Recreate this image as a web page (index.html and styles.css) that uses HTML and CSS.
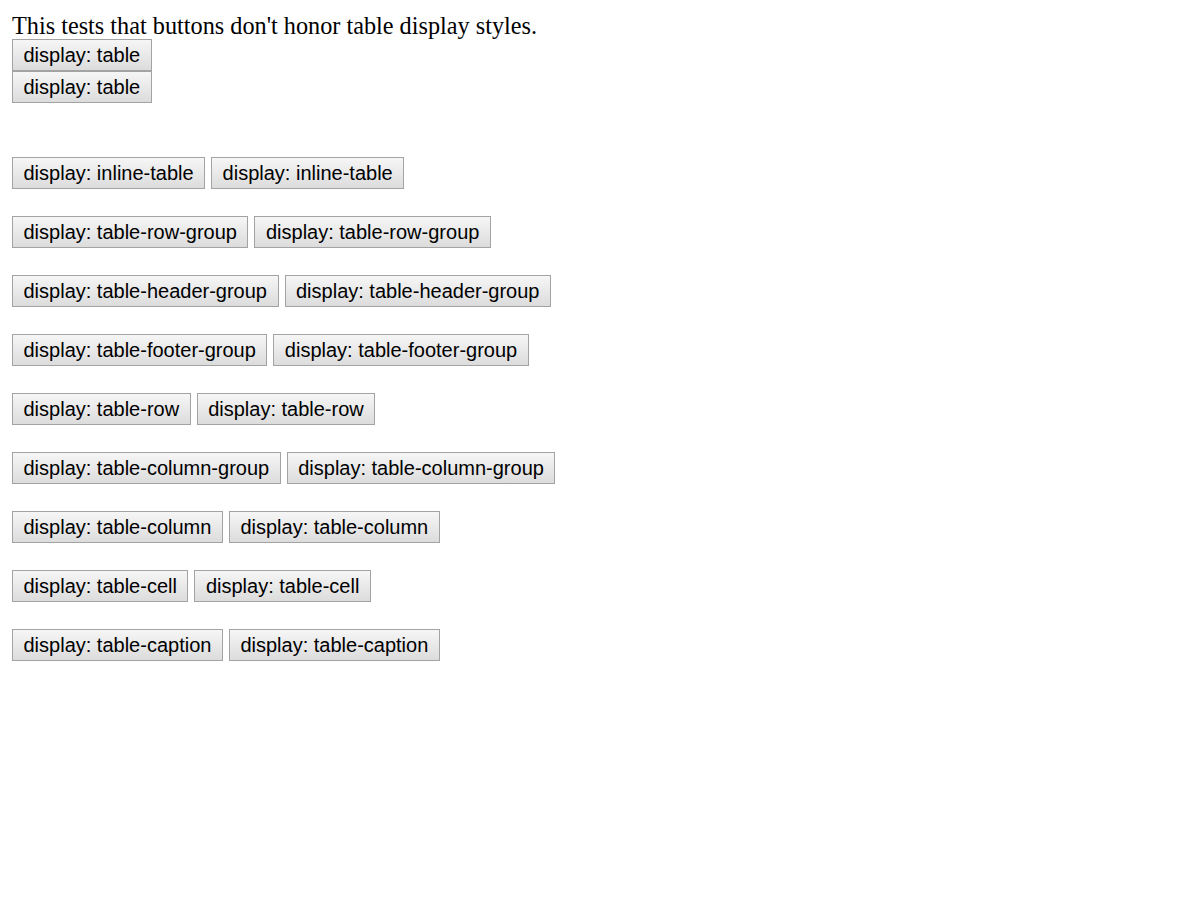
FILE: index.html
```html
<!DOCTYPE html>
<html>
<head>
<meta charset="utf-8">
<link rel="stylesheet" href="styles.css">
</head>
<body>
<div class="intro">This tests that buttons don't honor table display styles.</div>
<div class="stack">
  <button class="btn">display: table</button>
  <button class="btn">display: table</button>
</div>
<div class="rows">
  <div class="pair"><button class="btn">display: inline-table</button><button class="btn">display: inline-table</button></div>
  <div class="pair"><button class="btn">display: table-row-group</button><button class="btn">display: table-row-group</button></div>
  <div class="pair"><button class="btn">display: table-header-group</button><button class="btn">display: table-header-group</button></div>
  <div class="pair"><button class="btn">display: table-footer-group</button><button class="btn">display: table-footer-group</button></div>
  <div class="pair"><button class="btn">display: table-row</button><button class="btn">display: table-row</button></div>
  <div class="pair"><button class="btn">display: table-column-group</button><button class="btn">display: table-column-group</button></div>
  <div class="pair"><button class="btn">display: table-column</button><button class="btn">display: table-column</button></div>
  <div class="pair"><button class="btn">display: table-cell</button><button class="btn">display: table-cell</button></div>
  <div class="pair"><button class="btn">display: table-caption</button><button class="btn">display: table-caption</button></div>
</div>
</body>
</html>
```
FILE: styles.css
```css
html, body {
  background: #ffffff;
}
body {
  margin: 12px;
  font-family: "Liberation Serif", "Times New Roman", serif;
  font-size: 24.25px;
  line-height: 27px;
  color: #000;
}
.intro {
  height: 27px;
}
.stack {
  display: flex;
  flex-direction: column;
  align-items: flex-start;
}
.rows {
  display: flex;
  flex-direction: column;
  gap: 27px;
  margin-top: 54px;
}
.pair {
  display: flex;
  gap: 6px;
  align-items: flex-start;
}
.btn {
  font-family: "Liberation Sans", Arial, sans-serif;
  font-size: 20px;
  line-height: 24px;
  height: 32px;
  padding: 3px 10.5px;
  margin: 0;
  color: #000;
  border: 1px solid #a3a3a3;
  border-radius: 0;
  background: linear-gradient(to bottom, #f6f6f6 0%, #e9e9e9 50%, #dcdcdc 100%);
  box-sizing: border-box;
  white-space: nowrap;
}
```
